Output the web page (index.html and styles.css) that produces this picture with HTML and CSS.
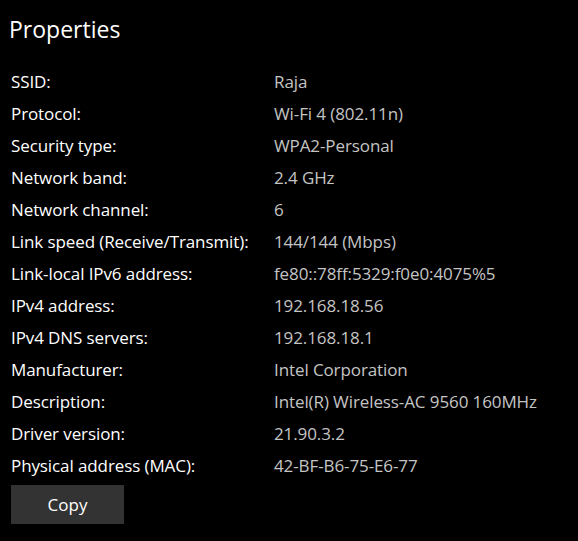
FILE: index.html
```html
<!DOCTYPE html>
<html>
<head>
<meta charset="utf-8">
<link rel="stylesheet" href="styles.css">
</head>
<body>
<div class="panel">
  <h1 class="title">Properties</h1>
  <div class="props">
    <div class="label">SSID:</div><div class="value">Raja</div>
    <div class="label">Protocol:</div><div class="value">Wi-Fi 4 (802.11n)</div>
    <div class="label">Security type:</div><div class="value">WPA2-Personal</div>
    <div class="label">Network band:</div><div class="value">2.4 GHz</div>
    <div class="label">Network channel:</div><div class="value">6</div>
    <div class="label">Link speed (Receive/Transmit):</div><div class="value">144/144 (Mbps)</div>
    <div class="label">Link-local IPv6 address:</div><div class="value">fe80::78ff:5329:f0e0:4075%5</div>
    <div class="label">IPv4 address:</div><div class="value">192.168.18.56</div>
    <div class="label">IPv4 DNS servers:</div><div class="value">192.168.18.1</div>
    <div class="label">Manufacturer:</div><div class="value">Intel Corporation</div>
    <div class="label">Description:</div><div class="value">Intel(R) Wireless-AC 9560 160MHz</div>
    <div class="label">Driver version:</div><div class="value">21.90.3.2</div>
    <div class="label">Physical address (MAC):</div><div class="value">42-BF-B6-75-E6-77</div>
  </div>
  <button class="copy">Copy</button>
</div>
</body>
</html>
```
FILE: styles.css
```css
html, body {
  margin: 0;
  padding: 0;
  background: #000;
}
body {
  width: 578px;
  height: 541px;
  overflow: hidden;
  font-family: "Open Sans", "Noto Sans", sans-serif;
  color: #fff;
}
.panel {
  padding: 12px 0 0 11px;
}
.title {
  margin: 0 0 0 -2px;
  font-weight: 400;
  font-size: 23px;
  line-height: 34px;
  height: 34px;
}
.props {
  margin-top: 20px;
  display: grid;
  grid-template-columns: 263px auto;
  grid-auto-rows: 32px;
  font-size: 17px;
  line-height: 32px;
  letter-spacing: -0.1px;
}
.label {
  color: #fff;
  white-space: nowrap;
}
.value {
  color: #c4c4c4;
  white-space: nowrap;
}
.copy {
  margin-top: 3px;
  width: 113px;
  height: 39px;
  background: #333;
  border: none;
  color: #fff;
  font-family: "Open Sans", "Noto Sans", sans-serif;
  font-size: 17px;
  padding: 0;
}
```
